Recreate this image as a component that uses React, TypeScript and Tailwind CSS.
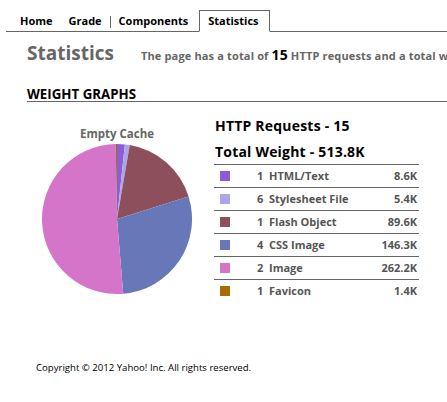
import React from "react";

const rows = [
  { n: 1, label: "HTML/Text", v: "8.6K", kb: 8.6, c: "#8b5cdb" },
  { n: 6, label: "Stylesheet File", v: "5.4K", kb: 5.4, c: "#ada5ea" },
  { n: 1, label: "Flash Object", v: "89.6K", kb: 89.6, c: "#8e4f5d" },
  { n: 4, label: "CSS Image", v: "146.3K", kb: 146.3, c: "#6877b7" },
  { n: 2, label: "Image", v: "262.2K", kb: 262.2, c: "#d475c9" },
  { n: 1, label: "Favicon", v: "1.4K", kb: 1.4, c: "#a86c00" },
];

function Pie() {
  const total = rows.reduce((s, r) => s + r.kb, 0);
  const cx = 75, cy = 75, r = 75;
  let acc = 0;
  const paths = rows.map((row, i) => {
    const a0 = (acc / total) * Math.PI * 2;
    acc += row.kb;
    const a1 = (acc / total) * Math.PI * 2;
    const x0 = cx + r * Math.sin(a0), y0 = cy - r * Math.cos(a0);
    const x1 = cx + r * Math.sin(a1), y1 = cy - r * Math.cos(a1);
    const large = a1 - a0 > Math.PI ? 1 : 0;
    const d = `M${cx},${cy} L${x0},${y0} A${r},${r} 0 ${large} 1 ${x1},${y1} Z`;
    return <path key={i} d={d} fill={row.c} />;
  });
  return (
    <svg width="150" height="150" viewBox="0 0 150 150" className="block">
      {paths}
    </svg>
  );
}

export default function App() {
  return (
    <div className="w-[447px] h-[402px] overflow-hidden bg-white text-black" style={{ fontFamily: '"Open Sans", "Noto Sans", sans-serif' }}>
      {/* Tabs */}
      <div className="pt-[11px] pl-[6px]">
        <div className="flex items-end border-b border-[#666] h-[21px] font-bold text-[11px] whitespace-nowrap">
          <span className="pl-[14px] pr-[16px] h-[20px] leading-[20px]">Home</span>
          <span className="pr-[8px] h-[20px] leading-[20px]">Grade</span>
          <span className="w-px h-[12px] mb-[3px] bg-[#666]" />
          <span className="pl-[8px] pr-[11px] h-[20px] leading-[20px]">Components</span>
          <span className="border border-[#666] border-b-white -mb-px pl-[8px] pr-[10px] h-[22px] leading-[20px] bg-white">Statistics</span>
        </div>
      </div>

      {/* Heading */}
      <div className="flex items-baseline pl-[27px] mt-[9px] h-[24px] whitespace-nowrap">
        <span className="text-[19px] font-bold text-[#666] leading-[24px]">Statistics</span>
        <span className="ml-[27px] text-[11px] font-bold text-[#666] tracking-[0.15px]">
          The page has a total of <span className="text-[14px] text-black">15</span> HTTP requests and a total weight of 513.8K bytes with empty cache
        </span>
      </div>

      {/* Weight graphs */}
      <div className="ml-[27px] mt-[23px] border-b border-[#666]">
        <div className="text-[13.3px] font-bold leading-[13px]">WEIGHT GRAPHS</div>
      </div>

      <div className="flex ml-[27px] mt-[16px]">
        <div className="w-[180px] flex flex-col items-center pt-[9px]">
          <div className="text-[11.5px] font-bold text-[#666] leading-[14px]">Empty Cache</div>
          <div className="mt-[3px]">
            <Pie />
          </div>
        </div>
        <div className="ml-[7px] w-[205px]">
          <div className="text-[14px] font-bold leading-[16px] pl-[1px] tracking-[0.2px]">HTTP Requests - 15</div>
          <div className="text-[14px] font-bold leading-[16px] pl-[1px] mt-[10px] tracking-[0.2px]">Total Weight - 513.8K</div>
          <div className="mt-[4px]">
            {rows.map((r, i) => (
              <div key={i} className="flex items-center h-[23px] border-t border-[#666] text-[11px] font-bold text-[#555]">
                <span className="w-[10px] h-[10px] ml-[6px]" style={{ backgroundColor: r.c }} />
                <span className="ml-[27px] w-[12px]">{r.n}</span>
                <span className="flex-1">{r.label}</span>
                <span className="pr-[2px]">{r.v}</span>
              </div>
            ))}
          </div>
        </div>
      </div>

      <div className="pl-[36px] mt-[60px] text-[9.6px] leading-[12px]">Copyright © 2012 Yahoo! Inc. All rights reserved.</div>
    </div>
  );
}
